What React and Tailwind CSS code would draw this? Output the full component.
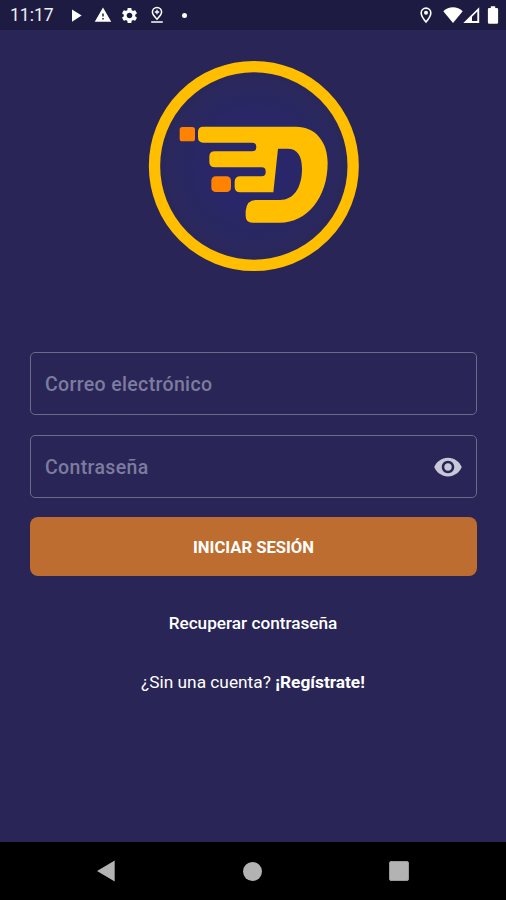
import { useState } from 'react';
import { MdPlayArrow, MdSettings, MdVisibility, MdWarning } from 'react-icons/md';

function StatusBar() {
  return (
    <header className="flex h-[30px] shrink-0 items-center bg-[#1e1b42] pl-[10px] pr-[7px] text-white">
      <span className="w-[55px] text-[17.5px] leading-[30px] text-[#eeeef4]">11:17</span>
      <MdPlayArrow className="mr-[8px] size-[21px]" />
      <MdWarning className="mr-[8px] size-[18px]" />
      <MdSettings className="mr-[9px] size-[19px]" />
      <svg viewBox="0 0 18 18" className="size-[18px]" fill="none" stroke="currentColor">
        <path d="M9 13.2C6.2 10.4 4.4 8.4 4.4 6a4.6 4.6 0 0 1 9.2 0c0 2.4-1.8 4.4-4.6 7.2Z" strokeWidth="1.5" />
        <path d="M9 3.8v4.4M6.8 6h4.4" strokeWidth="1.3" />
        <path d="M3.2 16h11.6" strokeWidth="1.5" />
      </svg>
      <span className="ml-[16px] size-[5px] rounded-full bg-white" />

      <div className="ml-auto flex items-center">
        <svg viewBox="0 0 12 18" className="mr-[11px] h-[18px] w-[12px]" fill="none" stroke="currentColor">
          <path d="M6 16C3.2 12.6 1.2 9.8 1.2 6.9a4.8 4.8 0 0 1 9.6 0C10.8 9.8 8.8 12.6 6 16Z" strokeWidth="1.6" />
          <circle cx="6" cy="6.8" r="2" fill="currentColor" stroke="none" />
        </svg>
        <svg viewBox="0 0 20 18" className="h-[18px] w-[20px]" fill="currentColor">
          <path d="M10 17 0.3 5.2C3 2.6 6.4 1.2 10 1.2s7 1.4 9.7 4Z" />
        </svg>
        <svg viewBox="0 0 17 18" className="mr-[7px] h-[18px] w-[17px]" fill="currentColor">
          <path fillRule="evenodd" d="M0.3 16.9 16.2 1.2v15.7ZM9 14.9h5.3V5.4L9 10.7Z" />
        </svg>
        <svg viewBox="0 0 12 20" className="h-[20px] w-[12px]" fill="currentColor">
          <path d="M3.8 1.2h4.4v1.7h1.5q1.4 0 1.4 1.4v13.1q0 1.4-1.4 1.4H2.3q-1.4 0-1.4-1.4V4.3q0-1.4 1.4-1.4h1.5Z" />
        </svg>
      </div>
    </header>
  );
}

function Logo() {
  return (
    <svg viewBox="21 30 636 636" className="size-[212px]" role="img" aria-label="Logo">
      <defs>
        <radialGradient id="glow">
          <stop offset="0" stopColor="#29276f" />
          <stop offset="0.5" stopColor="#292767" />
          <stop offset="1" stopColor="#2a2858" />
        </radialGradient>
      </defs>
      <circle cx="341.5" cy="348" r="298" fill="url(#glow)" stroke="#ffbf00" strokeWidth="34" />
      <rect x="119" y="231" width="46" height="43" rx="8" fill="#ff8200" />
      <rect x="214" y="379" width="59" height="47" rx="13" fill="#ff8200" />
      <path
        fill="#ffbf00"
        d="M190 230H468C526 230 563 275 563 338C563 444 500 518 420 518H338Q317 518 317 497V483Q320 450 347 450H420C460 450 486 414 486 357C486 317 472 296 443 296H414L400 427H301Q284 427 284 410V396Q284 379 301 379H365Q377 379 377 367V364Q377 352 365 352H225Q208 352 208 337V320Q208 304 225 304H337Q349 304 349 292V290Q349 278 337 278H190Q174 278 174 262V246Q174 230 190 230Z"
      />
    </svg>
  );
}

function Field({ trailing, ...props }) {
  return (
    <div className="flex h-[63px] items-center rounded-[5px] border-[1.5px] border-[#6c698b] pr-[13px] pl-[14px]">
      <input
        className="min-w-0 flex-1 bg-transparent pt-[2px] text-[19.5px] font-medium tracking-[0.35px] text-white outline-none placeholder:text-[#7d7b9f] placeholder:opacity-100"
        {...props}
      />
      {trailing}
    </div>
  );
}

function NavigationBar() {
  return (
    <nav className="flex h-[58px] shrink-0 items-center justify-between bg-black pl-[96px] pr-[97px]">
      <svg viewBox="0 0 20 22" className="h-[22px] w-[20px]" fill="#b3b3b3">
        <path d="M1 11 18.7 0.4v21.2Z" />
      </svg>
      <span className="size-[19px] rounded-full bg-[#b3b3b3]" />
      <span className="size-[20px] rounded-[2px] border border-[#999] bg-[#b3b3b3]" />
    </nav>
  );
}

function App() {
  const [email, setEmail] = useState('');
  const [password, setPassword] = useState('');
  const [showPassword, setShowPassword] = useState(false);

  return (
    <div className="flex h-[900px] w-[506px] flex-col overflow-hidden bg-[#292556] font-['Roboto',sans-serif] text-white">
      <StatusBar />

      <main className="flex flex-1 flex-col items-center pt-[30px]">
        <Logo />

        <form
          className="mt-[80px] flex w-full flex-col gap-5 pr-[29px] pl-[30px]"
          onSubmit={(event) => event.preventDefault()}
        >
          <Field
            placeholder="Correo electrónico"
            value={email}
            onChange={(event) => setEmail(event.target.value)}
          />
          <Field
            type={showPassword ? 'text' : 'password'}
            placeholder="Contraseña"
            value={password}
            onChange={(event) => setPassword(event.target.value)}
            trailing={
              <button type="button" aria-label="Mostrar contraseña" onClick={() => setShowPassword(!showPassword)}>
                <MdVisibility className="size-[30px] text-[#c9c8d8]" />
              </button>
            }
          />
          <button type="submit" className="-mt-px h-[59px] rounded-[8px] bg-[#bd6d2f] pt-[3px] text-[16.6px] font-bold">
            INICIAR SESIÓN
          </button>
        </form>

        <a href="#recuperar" className="mt-[34px] text-[17.2px] leading-[26px] font-medium">Recuperar contraseña</a>
        <p className="mt-[33px] text-[17.3px] leading-[26px]">
          ¿Sin una cuenta? <a href="#registro" className="font-bold">¡Regístrate!</a>
        </p>
      </main>

      <NavigationBar />
    </div>
  );
}

export default App;
